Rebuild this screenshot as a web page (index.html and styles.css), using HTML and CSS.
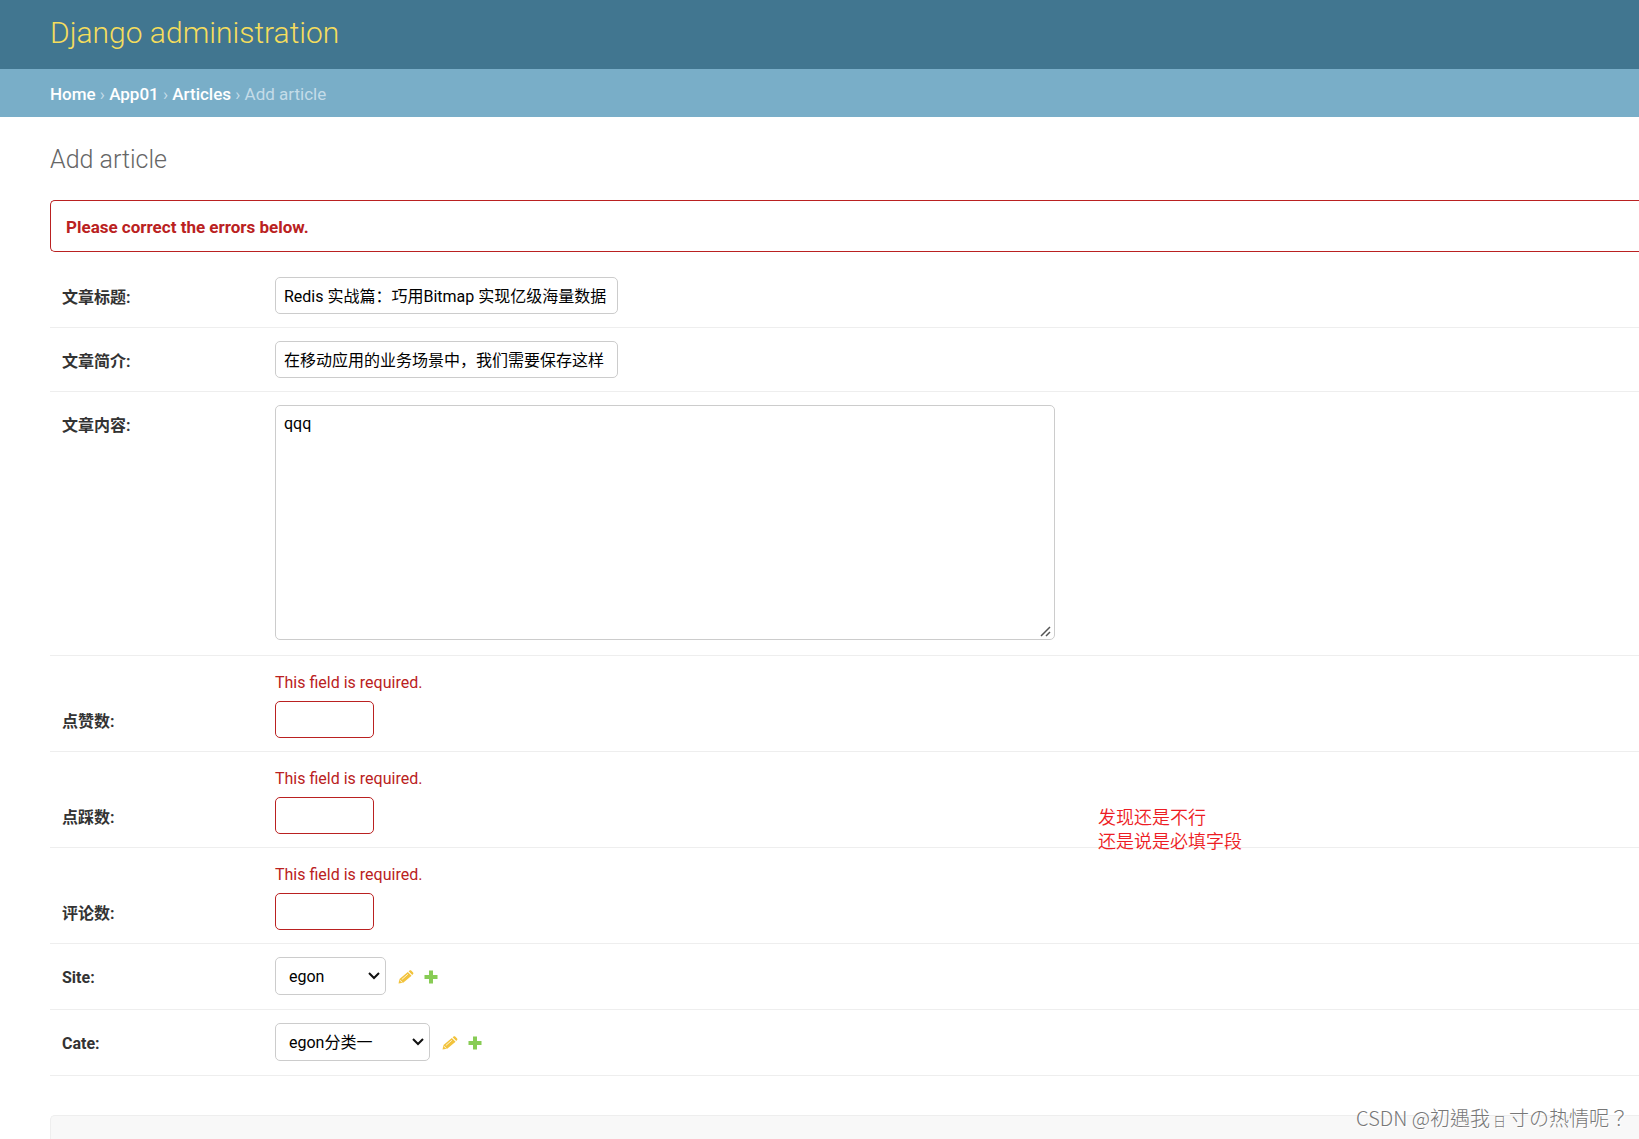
FILE: index.html
```html
<!DOCTYPE html>
<html lang="en">
<head>
<meta charset="utf-8">
<title>Add article | Django administration</title>
<link rel="stylesheet" href="styles.css">
</head>
<body>
<svg class="sprite" aria-hidden="true">
  <symbol id="icon-pencil" viewBox="0 0 16 16">
    <path fill="#f2c33c" d="M.5 14.500l1-4.500L9.800 3l3.800 3.800L5.200 13.800z"/>
    <path fill="#f2c33c" d="M10.600 2.300l1-.8c.5-.4 1.100-.4 1.600 0l1.900 1.900c.5.500.5 1.100 0 1.600l-.8.900z"/>
    <path fill="none" stroke="#fff" stroke-width=".8" d="M3.800 10.500l6-5.200M1.700 11l2.800 2.600"/>
  </symbol>
  <symbol id="icon-plus" viewBox="0 0 14 14">
    <path fill="#8c5" d="M5 0.500h4V5h4.500v4H9v4.500H5V9H.5V5H5z"/>
  </symbol>
</svg>
<header class="header"><a class="brand" href="#">Django administration</a></header>
<nav class="breadcrumbs"><a href="#">Home</a> › <a href="#">App01</a> › <a href="#">Articles</a> › Add article</nav>
<main class="content">
  <h1 class="title">Add article</h1>
  <form class="form">
    <p class="errornote">Please correct the errors below.</p>
    <div class="row">
      <label class="label" for="title">文章标题:</label>
      <input class="field text" id="title" type="text" value="Redis 实战篇：巧用Bitmap 实现亿级海量数据">
    </div>
    <div class="row">
      <label class="label" for="desc">文章简介:</label>
      <input class="field text" id="desc" type="text" value="在移动应用的业务场景中，我们需要保存这样">
    </div>
    <div class="row row-area">
      <label class="label" for="body">文章内容:</label>
      <textarea class="field area" id="body">qqq</textarea>
    </div>
    <div class="row row-error">
      <p class="error">This field is required.</p>
      <label class="label" for="up">点赞数:</label>
      <input class="field number" id="up" type="number">
    </div>
    <div class="row row-error">
      <p class="error">This field is required.</p>
      <label class="label" for="down">点踩数:</label>
      <input class="field number" id="down" type="number">
      <p class="note">发现还是不行<br>还是说是必填字段</p>
    </div>
    <div class="row row-error">
      <p class="error">This field is required.</p>
      <label class="label" for="comments">评论数:</label>
      <input class="field number" id="comments" type="number">
    </div>
    <div class="row row-select">
      <label class="label" for="site">Site:</label>
      <div class="related">
        <select class="field select site" id="site"><option>egon</option></select>
        <a class="tool" href="#" aria-label="Change site"><svg width="16" height="16"><use href="#icon-pencil"/></svg></a>
        <a class="tool" href="#" aria-label="Add site"><svg width="14" height="14"><use href="#icon-plus"/></svg></a>
      </div>
    </div>
    <div class="row row-select">
      <label class="label" for="cate">Cate:</label>
      <div class="related">
        <select class="field select cate" id="cate"><option>egon分类一</option></select>
        <a class="tool" href="#" aria-label="Change cate"><svg width="16" height="16"><use href="#icon-pencil"/></svg></a>
        <a class="tool" href="#" aria-label="Add cate"><svg width="14" height="14"><use href="#icon-plus"/></svg></a>
      </div>
    </div>
    <div class="submit-row"></div>
  </form>
</main>
<div class="watermark">CSDN @初遇我<span class="small">日</span>寸の热情呢？</div>
</body>
</html>
```
FILE: styles.css
```css
* { box-sizing: border-box; }

body {
  display: flex;
  flex-direction: column;
  min-height: 100vh;
  margin: 0;
  background: #fff;
  color: #333;
  font-family: Roboto, "Noto Sans CJK SC", sans-serif;
  font-size: 16px;
  line-height: 20px;
}

a { color: inherit; text-decoration: none; }
p { margin: 0; }
.sprite { display: none; }

.header {
  display: flex;
  align-items: center;
  height: 69px;
  padding: 0 50px 4px;
  background: #417690;
  color: #f5dd5d;
  font-size: 30px;
  font-weight: 300;
  line-height: 36px;
}

.breadcrumbs {
  height: 48px;
  padding: 15px 50px 13px;
  background: #79aec8;
  color: #c4dce8;
  font-size: 17px;
}
.breadcrumbs a { color: #fff; font-weight: 500; }

.content {
  display: flex;
  flex: 1;
  flex-direction: column;
  padding: 25px 0 0 50px;
}

.title {
  margin: 0 0 23px;
  color: #666;
  font-size: 25px;
  font-weight: 300;
  line-height: 35px;
}

.form { display: flex; flex: 1; flex-direction: column; }

.errornote {
  height: 52px;
  margin-bottom: 12px;
  padding: 16px 15px 14px;
  border: 1px solid #ba2121;
  border-right: 0;
  border-radius: 5px 0 0 5px;
  color: #ba2121;
  font-size: 17px;
  font-weight: 700;
}

.row {
  display: grid;
  grid-template-columns: 213px 1fr;
  padding: 13px 0 13px 12px;
  border-bottom: 1px solid #eee;
}

.label { padding-top: 11px; font-weight: 700; }

.field {
  margin: 0;
  padding: 6px 8px;
  border: 1px solid #ccc;
  border-radius: 5px;
  background: #fff;
  color: #000;
  font: inherit;
}

.text { width: 343px; height: 37px; padding: 5px 8px 7px; }
.area { display: block; width: 780px; height: 235px; padding-top: 8px; }
.area::-webkit-resizer {
  background: url("data:image/svg+xml,%3Csvg xmlns='http://www.w3.org/2000/svg' width='15' height='15'%3E%3Cpath d='M2 12L11 3M7 12l4-4' stroke='%23555' stroke-width='1.500'/%3E%3C/svg%3E") no-repeat;
}
.row-area { padding-bottom: 15px; }
.number { width: 99px; height: 37px; border-color: #ba2121; }

.row-error { position: relative; padding-top: 17px; row-gap: 8px; }
.error { grid-column: 2; color: #ba2121; }

.row-select { padding-bottom: 14px; }
.related { display: flex; align-items: center; }
.select {
  height: 38px;
  padding: 7px 24px 5px 13px;
  appearance: none;
  background: #fff url("data:image/svg+xml,%3Csvg xmlns='http://www.w3.org/2000/svg' width='12' height='8'%3E%3Cpath d='M1 1l5 5 5-5' fill='none' stroke='%23111' stroke-width='2'/%3E%3C/svg%3E") no-repeat right 5px center;
}
.site { width: 111px; }
.cate { width: 155px; }
.tool { display: flex; margin-left: 12px; padding-top: 2px; }
.tool + .tool { margin-left: 10px; }

.note {
  position: absolute;
  top: 54px;
  left: 1048px;
  color: #ed1c24;
  font-size: 18px;
  font-weight: 350;
  line-height: 24px;
}

.submit-row {
  flex: 1;
  min-height: 24px;
  margin-top: 39px;
  border: solid #eee;
  border-width: 1px 0 0 1px;
  border-radius: 5px 0 0 0;
  background: #f8f8f8;
}

.watermark {
  position: absolute;
  right: 10px;
  bottom: 4px;
  color: #777;
  font-family: "Noto Sans CJK TC", sans-serif;
  font-size: 20px;
  font-weight: 300;
  line-height: 28px;
  text-shadow: 1px 1px 0 #fff;
}
.small { margin: 0 3px; font-size: 13px; }
```
